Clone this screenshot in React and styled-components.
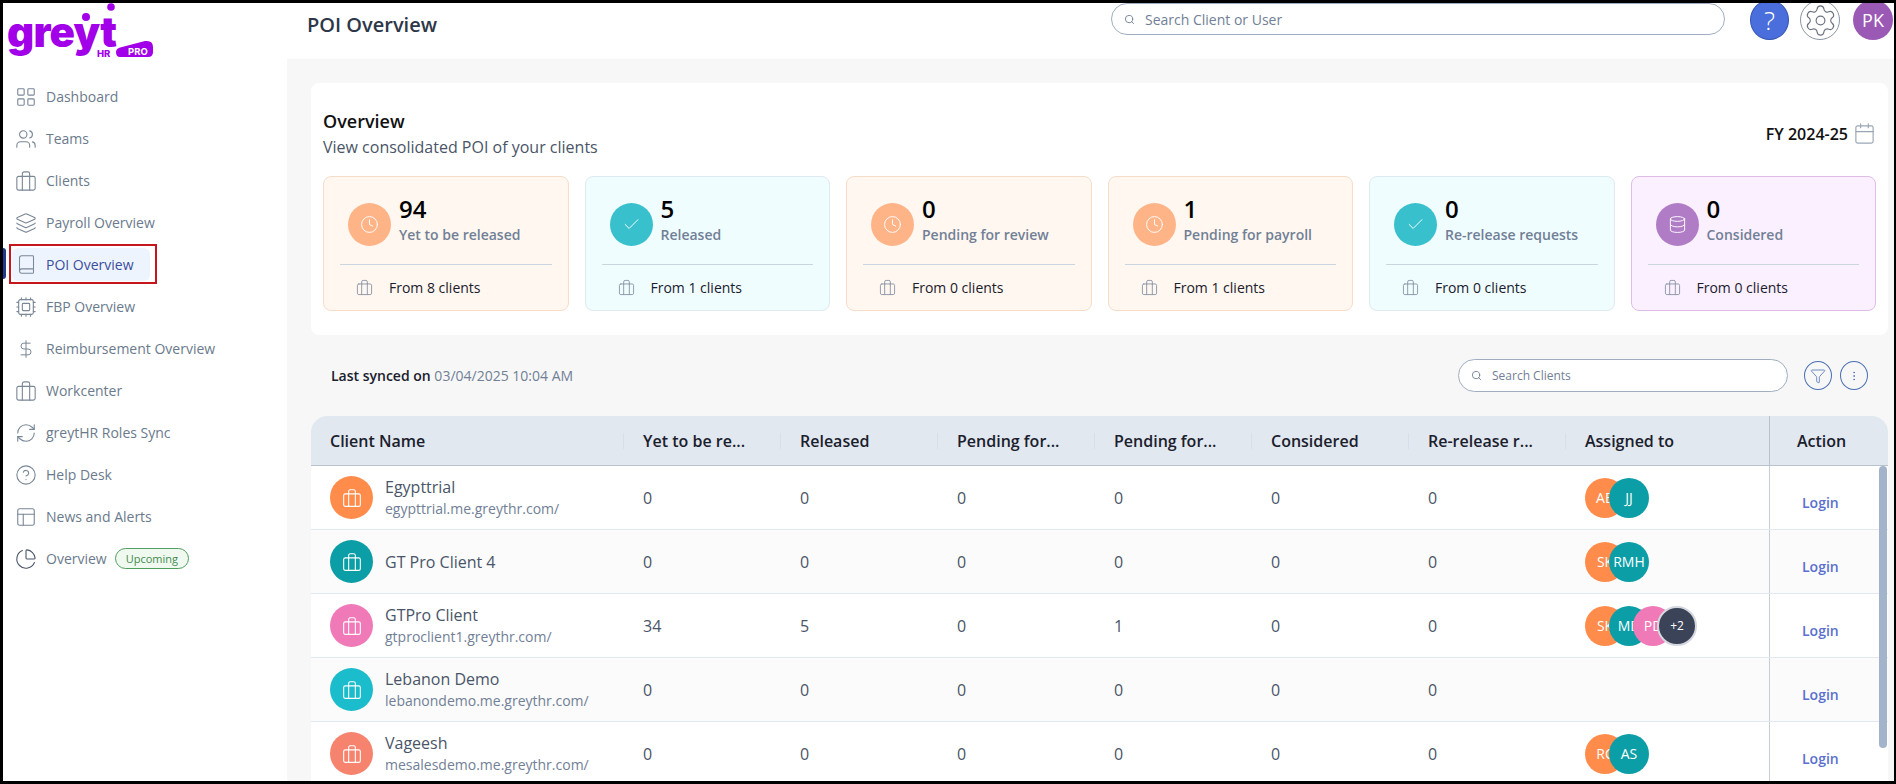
import React from "react";
import styled, { createGlobalStyle } from "styled-components";
import { LayoutGrid, Users, Layers, Book, Cpu, DollarSign, RefreshCw, CircleHelp, PanelsTopLeft, ChartPie, Search, Clock, Check, Database, Calendar, Filter, EllipsisVertical, Settings } from "lucide-react";

const Global = createGlobalStyle`
  html, body { margin: 0; padding: 0; height: 784px; overflow: hidden; background: #000; }
  * { box-sizing: border-box; }
  body { font-family: "Open Sans", "Liberation Sans", sans-serif; }
`;

const Frame = styled.div`
  width: 1896px; height: 784px; display: flex; overflow: hidden;
  border-style: solid; border-color: #000; border-width: 3px 2px 3px 3px; background: #fff;
`;
const Sidebar = styled.aside`
  width: 284px; flex: none; background: #fff; display: flex; flex-direction: column;
`;
const LogoBox = styled.div`height: 77px; padding: 0 0 0 5px;`;
const Nav = styled.nav`display: flex; flex-direction: column; gap: 9px; padding-left: 9px;`;
const NavItem = styled.div`
  position: relative; display: inline-flex; align-items: center; align-self: flex-start; height: 33px;
  padding: 0 16px 0 3px; gap: 9px; font-size: 14px; border-radius: 6px;
  color: ${p => p.$active ? "#3b4f9c" : "#6b7a8c"};
  background: ${p => p.$active ? "#eef4fe" : "transparent"};
`;
const NavIcon = styled.span`
  width: 22px; height: 22px; flex: none; display: flex; align-items: center; justify-content: center; color: ${p => p.$dark ? "#4a5568" : "#7a8796"};
`;
const ActiveBar = styled.span`
  position: absolute; left: -9px; top: 0; width: 3px; height: 31px; background: #1f3a8a; border-radius: 0 4px 4px 0;
`;
const Annotation = styled.span`
  position: absolute; left: -3px; right: -7px; top: -4px; bottom: -3px; border: 2px solid #c4161c;
`;
const Pill = styled.span`
  display: inline-flex; align-items: center; height: 21px; padding: 0 10px; margin-left: -1px; border-radius: 11px;
  border: 1px solid #4f9d5f; background: #f0f9f0; color: #3f8a4f; font-size: 11px; font-weight: 500;
`;
const Main = styled.main`flex: 1; min-width: 0; display: flex; flex-direction: column;`;
const Topbar = styled.header`
  height: 56px; flex: none; background: #fff; display: flex; align-items: flex-start; padding-left: 20px;
`;
const Title = styled.h1`
  margin: 0; width: 804px; font-size: 20px; line-height: 44px; font-weight: 600; color: #2d3748;
`;
const SearchBox = styled.div`
  display: flex; align-items: center; gap: 10px; border: 1px solid #a0aec0; border-radius: 17px; background: #fff;
  width: ${p => p.$w}px; height: ${p => p.$h}px; padding-left: 12px; font-size: ${p => p.$fs}px; color: #718096; flex: none;
`;
const TopActions = styled.div`display: flex; margin-left: 25px; margin-top: -3px; gap: 11px;`;
const HelpBtn = styled.div`
  width: 39px; height: 40px; border-radius: 50%; background: #4a6fdc; color: #fff; font-size: 26px; font-weight: 300;
  display: flex; align-items: center; justify-content: center; border: 1px solid #3455b5;
`;
const GearBtn = styled.div`
  width: 40px; height: 40px; border-radius: 50%; border: 1px solid #8a94a3; display: flex; align-items: center; justify-content: center; color: #6b7280;
`;
const UserBtn = styled.div`
  width: 40px; height: 40px; border-radius: 50%; background: #9b59b6; color: #fff; font-size: 18px; margin-left: 2px;
  display: flex; align-items: center; justify-content: center;
`;
const Content = styled.div`flex: 1; background: #f7f7f7; padding: 24px 6px 0 24px; min-height: 0; overflow: hidden;`;
const OverviewCard = styled.section`
  background: #fff; border-radius: 8px; height: 252px; padding: 26px 12px 0 12px;
`;
const OverviewHead = styled.div`display: flex; justify-content: space-between; align-items: flex-start; height: 67px;`;
const OverviewTitle = styled.h2`margin: 0; font-size: 18px; font-weight: 600; color: #111; line-height: 24px;`;
const OverviewSub = styled.p`margin: 3px 0 0; font-size: 16px; color: #4a5568; line-height: 22px;`;
const FyBox = styled.div`display: flex; align-items: center; gap: 5px; font-size: 16px; font-weight: 600; color: #111; margin-top: 13px;`;
const StatGrid = styled.div`display: grid; grid-template-columns: repeat(6, 1fr); gap: 16px;`;
const tones = {
  orange: { bg: "#fff7f0", border: "#f7ddc8", icon: "#ffb488" },
  teal: { bg: "#f0fdff", border: "#deeaf0", icon: "#38c0cc" },
  purple: { bg: "#fbf0ff", border: "#dfbde8", icon: "#b07cc6" },
};
const StatCard = styled.div`
  height: 135px; border-radius: 8px; border: 1px solid ${p => tones[p.$tone].border}; background: ${p => tones[p.$tone].bg};
  padding: 0 16px; display: flex; flex-direction: column;
`;
const StatTop = styled.div`
  height: 88px; display: flex; align-items: flex-start; gap: 8px; padding: 26px 0 0 8px; border-bottom: 1px solid #cbd5e0;
`;
const StatIcon = styled.div`
  width: 43px; height: 43px; border-radius: 50%; background: ${p => tones[p.$tone].icon}; flex: none; display: flex; align-items: center; justify-content: center; color: #fff;
`;
const StatText = styled.div`margin-top: -9px;`;
const StatNum = styled.div`font-size: 24px; font-weight: 600; color: #000; line-height: 30px;`;
const StatLabel = styled.div`font-size: 14px; font-weight: 600; color: #718096; line-height: 22px;`;
const StatFoot = styled.div`display: flex; align-items: center; gap: 16px; padding-left: 16px; flex: 1; font-size: 14px; color: #1a202c;`;
const FootIcon = styled.span`color: #8a94a6; display: flex;`;
const SyncRow = styled.div`display: flex; align-items: center; height: 33px; margin: 24px 0; padding: 0 20px;`;
const SyncText = styled.div`flex: 1; font-size: 14px; color: #718096;`;
const SyncStrong = styled.span`color: #1a202c; font-weight: 600;`;
const RoundBtn = styled.div`
  width: 28px; height: 29px; border-radius: 50%; border: 1px solid #4a6fb5; color: #4a6fb5; display: flex; align-items: center; justify-content: center; margin-left: ${p => p.$ml}px; flex: none;
`;
const TableWrap = styled.div`position: relative; border-radius: 16px 16px 0 0; overflow: hidden; background: #fff;`;
const cols = "313px repeat(6, 157px) 203px 119px";
const HeadRow = styled.div`
  display: grid; grid-template-columns: ${cols}; height: 50px; background: #e2e8f0; border-bottom: 1px solid #b8c2cf;
`;
const HeadCell = styled.div`
  display: flex; align-items: center; padding-left: ${p => p.$action ? 27 : 19}px; font-size: 16px; font-weight: 600; color: #1a202c;
  white-space: nowrap; position: relative;
  ${p => p.$action ? "border-left: 1px solid #b8c2cf;" : ""}
  ${p => p.$sep ? `&::after { content: ""; position: absolute; right: 0; top: 17px; height: 16px; width: 1px; background: #d8dfe8; }` : ""}
`;
const BodyRow = styled.div`
  display: grid; grid-template-columns: ${cols}; height: 64px; border-bottom: 1px solid #e2e8f0; background: ${p => p.$alt ? "#fbfbfb" : "#fff"};
`;
const ClientCell = styled.div`display: flex; align-items: center; gap: 12px; padding-left: 19px;`;
const ClientIcon = styled.div`
  width: 43px; height: 43px; border-radius: 50%; background: ${p => p.$c}; color: #fff; display: flex; align-items: center; justify-content: center; flex: none;
`;
const ClientName = styled.div`font-size: 16px; color: #4a5568; line-height: 22px;`;
const ClientUrl = styled.div`font-size: 14px; color: #718096; line-height: 21px;`;
const ValueCell = styled.div`display: flex; align-items: center; padding-left: 19px; font-size: 16px; color: #4a5568;`;
const AssignCell = styled.div`display: flex; align-items: center; padding-left: 19px;`;
const Avatar = styled.div`
  width: 40px; height: 40px; border-radius: 50%; background: ${p => p.$c}; color: #fff; font-size: 14px; display: flex; align-items: center; justify-content: center; flex: none;
  &:not(:first-child) { margin-left: -16px; }
`;
const MoreAvatar = styled(Avatar)`background: #3a4358; border: 2px solid #d5d8de; font-size: 12px;`;
const ActionCell = styled.div`
  border-left: 1px solid #c5ced9; display: flex; align-items: center; padding: 10px 0 0 32px; font-size: 14px; font-weight: 600; color: #5a6fd0;
`;
const Scrollbar = styled.div`
  position: absolute; right: 1px; top: 50px; width: 8px; height: 282px; border-radius: 4px; background: #a3b4ca;
`;

const Brief = ({ size = 20, strokeWidth = 1.3 }) => (
  <svg width={size} height={size} viewBox="0 0 24 24" fill="none" stroke="currentColor" strokeWidth={strokeWidth} strokeLinecap="round" strokeLinejoin="round">
    <rect x="2" y="7" width="20" height="15" rx="2" />
    <path d="M8 7V4a2 2 0 0 1 2-2h4a2 2 0 0 1 2 2v3" />
    <path d="M8 7v15M16 7v15" />
  </svg>
);

const Logo = () => (
  <svg width="156" height="60" viewBox="0 0 156 60" style={{ display: "block" }}>
    <text x="-1" y="44" fontFamily="Inter, 'Open Sans', sans-serif" fontWeight="900" fontSize="42" letterSpacing="-0.8" fill="#a100e8">greyt</text>
    <circle cx="78" cy="14" r="4" fill="#a100e8" />
    <circle cx="103" cy="4" r="3.8" fill="#a100e8" />
    <text x="89" y="54" fontFamily="Inter, 'Open Sans', sans-serif" fontWeight="800" fontSize="9.5" fill="#a100e8">HR</text>
    <path d="M112 54 Q108 54 108 49 Q108 45 114 44 L137 38 Q145 37 145 44 L145 49 Q145 54 140 54 Z" fill="#a100e8" />
    <text x="120" y="52" fontFamily="Inter, 'Open Sans', sans-serif" fontWeight="700" fontSize="9.5" fill="#fff">PRO</text>
  </svg>
);

const navs = [
  [LayoutGrid, "Dashboard", 22], [Users, "Teams", 24], [Brief, "Clients", 22], [Layers, "Payroll Overview", 22],
  [Book, "POI Overview", 21, true], [Cpu, "FBP Overview", 22], [DollarSign, "Reimbursement Overview", 20], [Brief, "Workcenter", 22],
  [RefreshCw, "greytHR Roles Sync", 26], [CircleHelp, "Help Desk", 22], [PanelsTopLeft, "News and Alerts", 22], [ChartPie, "Overview", 22],
];
const stats = [
  ["orange", Clock, "94", "Yet to be released", 8], ["teal", Check, "5", "Released", 1],
  ["orange", Clock, "0", "Pending for review", 0], ["orange", Clock, "1", "Pending for payroll", 1],
  ["teal", Check, "0", "Re-release requests", 0], ["purple", Database, "0", "Considered", 0],
];
const heads = ["Client Name", "Yet to be re...", "Released", "Pending for...", "Pending for...", "Considered", "Re-release r...", "Assigned to"];
const O = "#ff8c4b", T = "#0c9ea6", P = "#f07ab8";
const rows = [
  { n: "Egypttrial", u: "egypttrial.me.greythr.com/", c: O, v: [0, 0, 0, 0, 0, 0], a: [["AB", O], ["JJ", T]] },
  { n: "GT Pro Client 4", c: T, v: [0, 0, 0, 0, 0, 0], a: [["SK", O], ["RMH", T]] },
  { n: "GTPro Client", u: "gtproclient1.greythr.com/", c: P, v: [34, 5, 0, 1, 0, 0], a: [["SK", O], ["MD", T], ["PD", P]], more: "+2" },
  { n: "Lebanon Demo", u: "lebanondemo.me.greythr.com/", c: "#1bbccb", v: [0, 0, 0, 0, 0, 0], a: [] },
  { n: "Vageesh", u: "mesalesdemo.me.greythr.com/", c: "#f6836e", v: [0, 0, 0, 0, 0, 0], a: [["RC", O], ["AS", T]] },
];

export default function App() {
  return (
    <Frame>
      <Global />
      <Sidebar>
        <LogoBox><Logo /></LogoBox>
        <Nav>
          {navs.map(([I, label, size, active]) => (
            <NavItem key={label} $active={active}>
              {active && <ActiveBar />}
              <NavIcon $dark={label === "Overview"}><I size={size} strokeWidth={1.2} /></NavIcon>
              {label}
              {label === "Overview" && <Pill>Upcoming</Pill>}
              {active && <Annotation />}
            </NavItem>
          ))}
        </Nav>
      </Sidebar>
      <Main>
        <Topbar>
          <Title>POI Overview</Title>
          <SearchBox $w={614} $h={32} $fs={14}><Search size={11} />Search Client or User</SearchBox>
          <TopActions>
            <HelpBtn>?</HelpBtn>
            <GearBtn><Settings size={35} strokeWidth={0.8} /></GearBtn>
            <UserBtn>PK</UserBtn>
          </TopActions>
        </Topbar>
        <Content>
          <OverviewCard>
            <OverviewHead>
              <div>
                <OverviewTitle>Overview</OverviewTitle>
                <OverviewSub>View consolidated POI of your clients</OverviewSub>
              </div>
              <FyBox>FY 2024-25<Calendar size={23} strokeWidth={1.2} color="#9aa5b4" /></FyBox>
            </OverviewHead>
            <StatGrid>
              {stats.map(([tone, I, num, label, from], i) => (
                <StatCard key={i} $tone={tone}>
                  <StatTop>
                    <StatIcon $tone={tone}><I size={19} strokeWidth={1.2} /></StatIcon>
                    <StatText><StatNum>{num}</StatNum><StatLabel>{label}</StatLabel></StatText>
                  </StatTop>
                  <StatFoot><FootIcon><Brief size={17} /></FootIcon>From {from} clients</StatFoot>
                </StatCard>
              ))}
            </StatGrid>
          </OverviewCard>
          <SyncRow>
            <SyncText><SyncStrong>Last synced on</SyncStrong> 03/04/2025 10:04 AM</SyncText>
            <SearchBox $w={330} $h={33} $fs={12}><Search size={11} />Search Clients</SearchBox>
            <RoundBtn $ml={16}><Filter size={16} strokeWidth={1.2} /></RoundBtn>
            <RoundBtn $ml={8}><EllipsisVertical size={12} strokeWidth={1.5} /></RoundBtn>
          </SyncRow>
          <TableWrap>
            <HeadRow>
              {heads.map((h, i) => <HeadCell key={i} $sep={i < 7}>{h}</HeadCell>)}
              <HeadCell $action>Action</HeadCell>
            </HeadRow>
            {rows.map((r, i) => (
              <BodyRow key={r.n} $alt={i % 2 === 1}>
                <ClientCell>
                  <ClientIcon $c={r.c}><Brief size={20} /></ClientIcon>
                  <div>
                    <ClientName>{r.n}</ClientName>
                    {r.u && <ClientUrl>{r.u}</ClientUrl>}
                  </div>
                </ClientCell>
                {r.v.map((v, j) => <ValueCell key={j}>{v}</ValueCell>)}
                <AssignCell>
                  {r.a.map(([t, c]) => <Avatar key={t} $c={c}>{t}</Avatar>)}
                  {r.more && <MoreAvatar $c="#3a4358">{r.more}</MoreAvatar>}
                </AssignCell>
                <ActionCell>Login</ActionCell>
              </BodyRow>
            ))}
            <Scrollbar />
          </TableWrap>
        </Content>
      </Main>
    </Frame>
  );
}
